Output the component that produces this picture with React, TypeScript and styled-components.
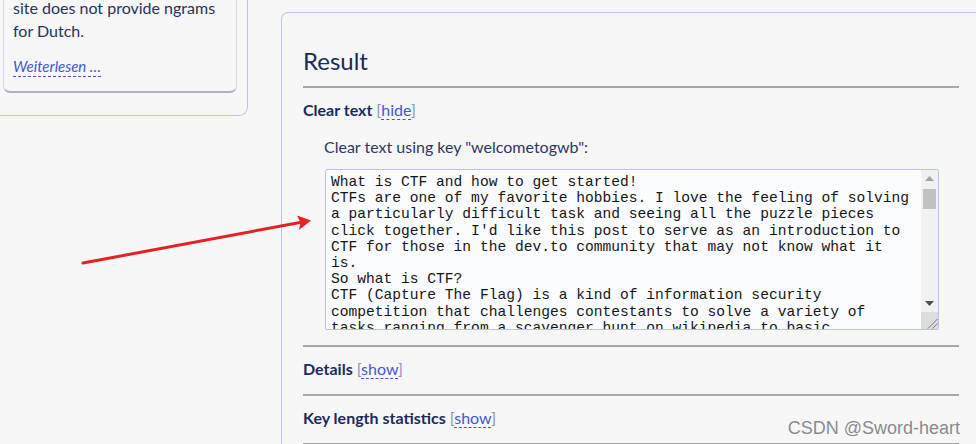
import React from "react";
import styled, { createGlobalStyle } from "styled-components";

const Global = createGlobalStyle`
  html, body { margin: 0; padding: 0; background: #f7f7f8; overflow: hidden; }
  body { font-family: Lato, "Liberation Sans", sans-serif; color: #1d2b5c; }
`;

const Page = styled.div`
  position: relative;
  width: 976px;
  height: 444px;
  overflow: hidden;
  display: flex;
  align-items: flex-start;
  gap: 33px;
`;

const Sidebar = styled.div`
  flex: 0 0 260px;
  margin-left: -12px;
  margin-top: -4px;
`;

const OuterCard = styled.div`
  border: 1px solid #b9c5ef;
  border-top: none;
  border-radius: 0 0 9px 9px;
  padding: 0 10px 22px 14px;
`;

const InnerCard = styled.div`
  border-bottom: 2px solid #a9b0d2;
  border-right: 1px solid #d3d8ec;
  border-left: 1px solid #d3d8ec;
  border-radius: 0 0 7px 7px;
  padding: 0 8px 14px 9px;
  font-size: 16px;
  line-height: 23px;
  color: #26325e;
`;

const More = styled.a`
  display: inline-block;
  margin-top: 15px;
  font-size: 15px;
  font-style: italic;
  line-height: 19px;
  color: #4157cf;
  text-decoration: none;
  border-bottom: 1px dashed #4157cf;
`;

const Panel = styled.section`
  margin-top: 12px;
  flex: 0 0 auto;
  width: 656px;
  border: 1px solid #b9c5ef;
  border-right: none;
  border-radius: 7px 0 0 0;
  padding: 30px 40px 0 21px;
`;

const Title = styled.h2`
  margin: 0;
  font-size: 24px;
  font-weight: 400;
  line-height: 36px;
  color: #1b2a5c;
  padding-bottom: 7px;
  border-bottom: 2px solid #a7a7a7;
`;

const Section = styled.div`
  border-bottom: 2px solid #a7a7a7;
  padding: 10px 0 13px;
`;

const SectionHead = styled.div`
  font-size: 16px;
  font-weight: 700;
  line-height: 24px;
  color: #1b2a5c;
`;

const Toggle = styled.span`
  font-weight: 400;
  color: #8a92b8;
  margin-left: 4px;
`;

const ToggleLink = styled.a`
  color: #4157cf;
  text-decoration: none;
  border-bottom: 1px dashed #4157cf;
`;

const Body = styled.div`
  padding: 13px 0 2px 21px;
`;

const Label = styled.div`
  font-size: 16px;
  line-height: 24px;
  color: #2a3868;
  margin-bottom: 10px;
`;

const Frame = styled.div`
  display: flex;
  box-sizing: border-box;
  width: 614px;
  height: 161px;
  margin-left: 1px;
  border: 1px solid #b5c2f0;
  border-radius: 2px;
  background: #fbfcff;
  overflow: hidden;
`;

const Output = styled.textarea`
  flex: 1 1 auto;
  min-width: 0;
  box-sizing: border-box;
  height: 100%;
  margin: 0;
  padding: 4px 5px 3px;
  border: none;
  background: transparent;
  color: #151515;
  font-family: "Liberation Mono", "Courier New", monospace;
  font-size: 14.6px;
  line-height: 16.2px;
  resize: none;
  outline: none;
  overflow: hidden;
`;

const Rail = styled.div`
  flex: 0 0 17px;
  display: flex;
  flex-direction: column;
  background: #f1f1f1;
`;

const RailButton = styled.div`
  flex: 0 0 17px;
  display: flex;
  align-items: center;
  justify-content: center;
`;

const Thumb = styled.div`
  flex: 0 0 20px;
  margin: 2px 2px 0;
  background: #c1c1c1;
`;

const Spacer = styled.div`
  flex: 1 1 auto;
`;

const Grip = styled.div`
  flex: 0 0 17px;
  background: #dcdcdc;
  display: flex;
  align-items: flex-end;
  justify-content: flex-end;
`;

const Arrow = styled.svg`
  position: absolute;
  left: 0;
  top: 0;
  pointer-events: none;
`;

const Watermark = styled.div`
  position: absolute;
  right: 16px;
  bottom: 5px;
  font-family: "Liberation Sans", Arial, sans-serif;
  font-size: 18px;
  color: #8a8a8a;
  text-shadow: 0 0 1px #fff;
`;

const text = `What is CTF and how to get started!
CTFs are one of my favorite hobbies. I love the feeling of solving a particularly difficult task and seeing all the puzzle pieces click together. I'd like this post to serve as an introduction to CTF for those in the dev.to community that may not know what it is.
So what is CTF?
CTF (Capture The Flag) is a kind of information security competition that challenges contestants to solve a variety of tasks ranging from a scavenger hunt on wikipedia to basic programming exercises, to hacking your way into a server to steal data.`;

export default function App() {
  return (
    <Page>
      <Global />
      <Sidebar>
        <OuterCard>
          <InnerCard>
            <div>site does not provide ngrams</div>
            <div>for Dutch.</div>
            <More href="#">Weiterlesen …</More>
          </InnerCard>
        </OuterCard>
      </Sidebar>
      <Panel>
        <Title>Result</Title>
        <Section>
          <SectionHead>
            Clear text
            <Toggle>
              [<ToggleLink href="#">hide</ToggleLink>]
            </Toggle>
          </SectionHead>
          <Body>
            <Label>Clear text using key "welcometogwb":</Label>
            <Frame>
              <Output readOnly value={text} />
              <Rail>
                <RailButton>
                  <svg width="9" height="5" viewBox="0 0 9 5">
                    <path d="M0 5 L4.5 0 L9 5 Z" fill="#a3a3a3" />
                  </svg>
                </RailButton>
                <Thumb />
                <Spacer />
                <RailButton>
                  <svg width="9" height="5" viewBox="0 0 9 5">
                    <path d="M0 0 L4.5 5 L9 0 Z" fill="#505050" />
                  </svg>
                </RailButton>
                <Grip>
                  <svg width="12" height="12" viewBox="0 0 12 12">
                    <path d="M2 11.5 L11.5 2 M6.5 11.5 L11.5 6.5" stroke="#7a7a7a" strokeWidth="1" />
                  </svg>
                </Grip>
              </Rail>
            </Frame>
          </Body>
        </Section>
        <Section>
          <SectionHead>
            Details
            <Toggle>
              [<ToggleLink href="#">show</ToggleLink>]
            </Toggle>
          </SectionHead>
        </Section>
        <Section>
          <SectionHead>
            Key length statistics
            <Toggle>
              [<ToggleLink href="#">show</ToggleLink>]
            </Toggle>
          </SectionHead>
        </Section>
      </Panel>
      <Arrow width="976" height="444" viewBox="0 0 976 444">
        <line x1="83" y1="263" x2="300" y2="222.5" stroke="#e52222" strokeWidth="3" strokeLinecap="round" />
        <path d="M311 220.5 L297 215.5 L300.5 222.5 L299 230 Z" fill="#e52222" />
      </Arrow>
      <Watermark>CSDN @Sword-heart</Watermark>
    </Page>
  );
}
